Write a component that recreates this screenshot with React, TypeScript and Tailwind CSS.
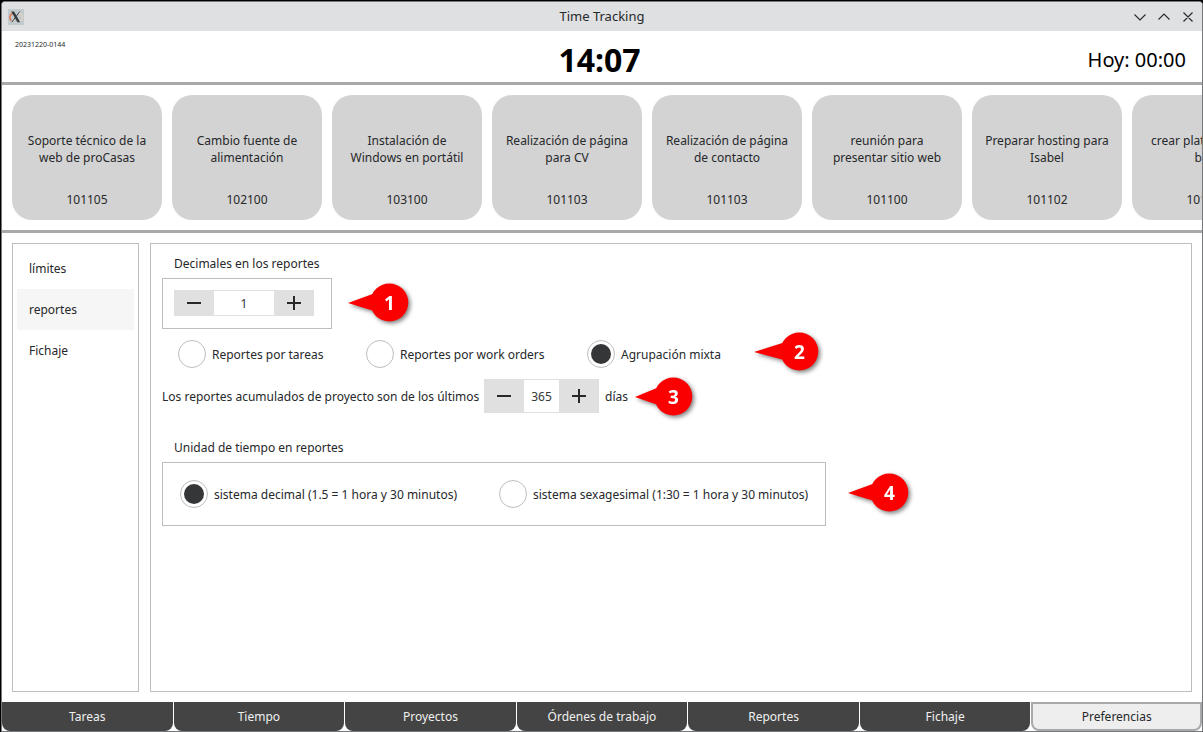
import React from 'react';

const tasks = [
  { lines: ['Soporte técnico de la', 'web de proCasas'], code: '101105' },
  { lines: ['Cambio fuente de', 'alimentación'], code: '102100' },
  { lines: ['Instalación de', 'Windows en portátil'], code: '103100' },
  { lines: ['Realización de página', 'para CV'], code: '101103' },
  { lines: ['Realización de página', 'de contacto'], code: '101103' },
  { lines: ['reunión para', 'presentar sitio web'], code: '101100' },
  { lines: ['Preparar hosting para', 'Isabel'], code: '101102' },
  { lines: ['crear plataforma de', 'blog'], code: '101101' },
];

const tabs = ['Tareas', 'Tiempo', 'Proyectos', 'Órdenes de trabajo', 'Reportes', 'Fichaje', 'Preferencias'];

function XLogo() {
  return (
    <svg width="16" height="16" viewBox="0 0 16 16">
      <rect width="16" height="16" fill="#c3cacd" />
      <path d="M5 4.2C1.5 5.5 .9 9.5 3.3 11.6" stroke="#e0714c" strokeWidth="1.5" fill="none" />
      <path d="M11 4.5C15.6 5.5 15.8 10.8 10.5 12.3" stroke="#e2d3c2" strokeWidth="1.3" fill="none" />
      <path d="M3.2 2.6H6L12.2 13.2H9.4Z" fill="#33383a" />
      <path d="M11.7 2.6L3.8 13.2" stroke="#33383a" strokeWidth="0.9" />
    </svg>
  );
}

function Stepper({ value, box, mid }: { value: string; box: string; mid: string }) {
  return (
    <div className={`flex bg-[#e0e0e0] ${box}`}>
      <div className="flex w-10 items-center justify-center">
        <svg width="14" height="14" viewBox="0 0 14 14"><path d="M0 7H14" stroke="#26282a" strokeWidth="2" /></svg>
      </div>
      <div className={`my-px flex items-center justify-center bg-white text-[#353637] ${mid}`}>{value}</div>
      <div className="flex w-10 items-center justify-center">
        <svg width="14" height="14" viewBox="0 0 14 14"><path d="M0 7H14M7 0V14" stroke="#26282a" strokeWidth="2" /></svg>
      </div>
    </div>
  );
}

function Radio({ label, checked, width }: { label: string; checked?: boolean; width: string }) {
  return (
    <div className={`flex h-7 shrink-0 items-center gap-1.5 whitespace-nowrap ${width}`}>
      <div className="flex size-7 shrink-0 items-center justify-center rounded-full border border-[#bdbdbd]">
        {checked && <div className="size-5 rounded-full bg-[#353637]" />}
      </div>
      <span>{label}</span>
    </div>
  );
}

function Marker({ n, place, tip }: { n: number; place: string; tip: number }) {
  return (
    <svg className={`absolute overflow-visible drop-shadow-[2px_2px_2px_rgba(0,0,0,0.5)] ${place}`} width="38" height="38" viewBox="0 0 38 38">
      <path d={`M${tip} 20L4 10.5V28Z`} fill="#fb0000" />
      <circle cx="19.3" cy="19.5" r="19" fill="#fb0000" />
      <text x="19.5" y="26.5" textAnchor="middle" className="fill-white font-['Noto_Sans',sans-serif] text-[19px] font-bold">{n}</text>
    </svg>
  );
}

export default function App() {
  return (
    <div className="relative h-[732px] w-[1203px] overflow-hidden bg-black pl-px pt-px font-['Noto_Sans',sans-serif] text-[12px] leading-[17px] text-[#26282a]">
      <div className="flex h-full w-full flex-col overflow-hidden rounded-t-[4px] border border-[#77787a] bg-white">
        <div className="grid h-[29px] shrink-0 grid-cols-3 items-center bg-[#dfe0e2] pl-1.5 pr-2">
          <XLogo />
          <div className="pl-0.5 text-center text-[13px]">Time Tracking</div>
          <svg className="justify-self-end" width="60" height="12" viewBox="0 0 60 12" fill="none" stroke="#26282a" strokeWidth="1.1">
            <path d="M.5 3.5L6 9L11.5 3.5M24.5 8.5L30 3L35.5 8.5M49.5 1.5L58.5 10.5M58.5 1.5L49.5 10.5" />
          </svg>
        </div>

        <header className="grid h-[54px] shrink-0 grid-cols-3 border-b-3 border-[#a9a9a9] text-black">
          <div className="pl-[13px] pt-[5px] text-[7px] text-[#26282a]">20231220-0144</div>
          <div className="pr-[5px] pt-3 text-center text-[32px] font-bold leading-[34px]">14:07</div>
          <div className="pr-4 pt-3 text-right text-[20px] leading-[34px]">Hoy: 00:00</div>
        </header>

        <div className="flex h-[148px] shrink-0 gap-2.5 overflow-hidden border-b-3 border-[#a9a9a9] pl-2.5 pt-2.5">
          {tasks.map((t, i) => (
            <div key={i} className="flex h-[125px] w-[150px] shrink-0 flex-col items-center rounded-[20px] bg-[#d3d3d3] pt-[37px]">
              <div className="text-center">
                {t.lines.map((l) => <div key={l} className="whitespace-nowrap">{l}</div>)}
              </div>
              <div className="mt-[25px]">{t.code}</div>
            </div>
          ))}
        </div>

        <div className="flex min-h-0 flex-1 gap-[11px] p-2.5">
          <nav className="w-[127px] shrink-0 border border-[#bdbdbd] p-1">
            <div className="flex h-[41px] items-center px-3">límites</div>
            <div className="flex h-[41px] items-center bg-[#f6f6f6] px-3">reportes</div>
            <div className="flex h-[41px] items-center px-3">Fichaje</div>
          </nav>

          <main className="flex-1 border border-[#bdbdbd] pl-[11px] pt-[11px]">
            <div className="h-[23px] pl-3">Decimales en los reportes</div>
            <div className="h-[51px] w-[170px] border border-[#bdbdbd] pl-[11px] pt-[11px]">
              <Stepper value="1" box="h-[26px] w-[140px]" mid="w-[60px]" />
            </div>
            <div className="mt-[11px] flex pl-4">
              <Radio label="Reportes por tareas" width="w-[188px]" />
              <Radio label="Reportes por work orders" width="w-[221px]" />
              <Radio label="Agrupación mixta" width="w-[150px]" checked />
            </div>
            <div className="mt-[11px] flex h-[34px] items-center">
              <div className="w-[322px] whitespace-nowrap">Los reportes acumulados de proyecto son de los últimos</div>
              <Stepper value="365" box="h-[34px] w-[115px]" mid="w-[35px]" />
              <div className="pl-1.5">días</div>
            </div>
            <div className="mt-[26px] h-[23px] pl-3">Unidad de tiempo en reportes</div>
            <div className="flex h-16 w-[664px] items-center border border-[#bdbdbd] pl-[17px]">
              <Radio label="sistema decimal (1.5 = 1 hora y 30 minutos)" width="w-[319px]" checked />
              <Radio label="sistema sexagesimal (1:30 = 1 hora y 30 minutos)" width="w-[310px]" />
            </div>
          </main>
        </div>

        <footer className="grid h-[29px] shrink-0 grid-cols-7 gap-px">
          {tabs.map((t, i) => (
            <div
              key={t}
              className={
                i === 6
                  ? 'flex items-center justify-center rounded-b-[8px] border-2 border-[#a9a9a9] bg-[#eeeeee]'
                  : 'flex items-center justify-center rounded-b-[8px] bg-[#444444] text-[#f0f0f0]'
              }
            >
              {t}
            </div>
          ))}
        </footer>
      </div>

      <Marker n={1} place="left-[370px] top-[283px]" tip={-22} />
      <Marker n={2} place="left-[780px] top-[332px]" tip={-26} />
      <Marker n={3} place="left-[654px] top-[377px]" tip={-19} />
      <Marker n={4} place="left-[870px] top-[473px]" tip={-22} />
    </div>
  );
}
